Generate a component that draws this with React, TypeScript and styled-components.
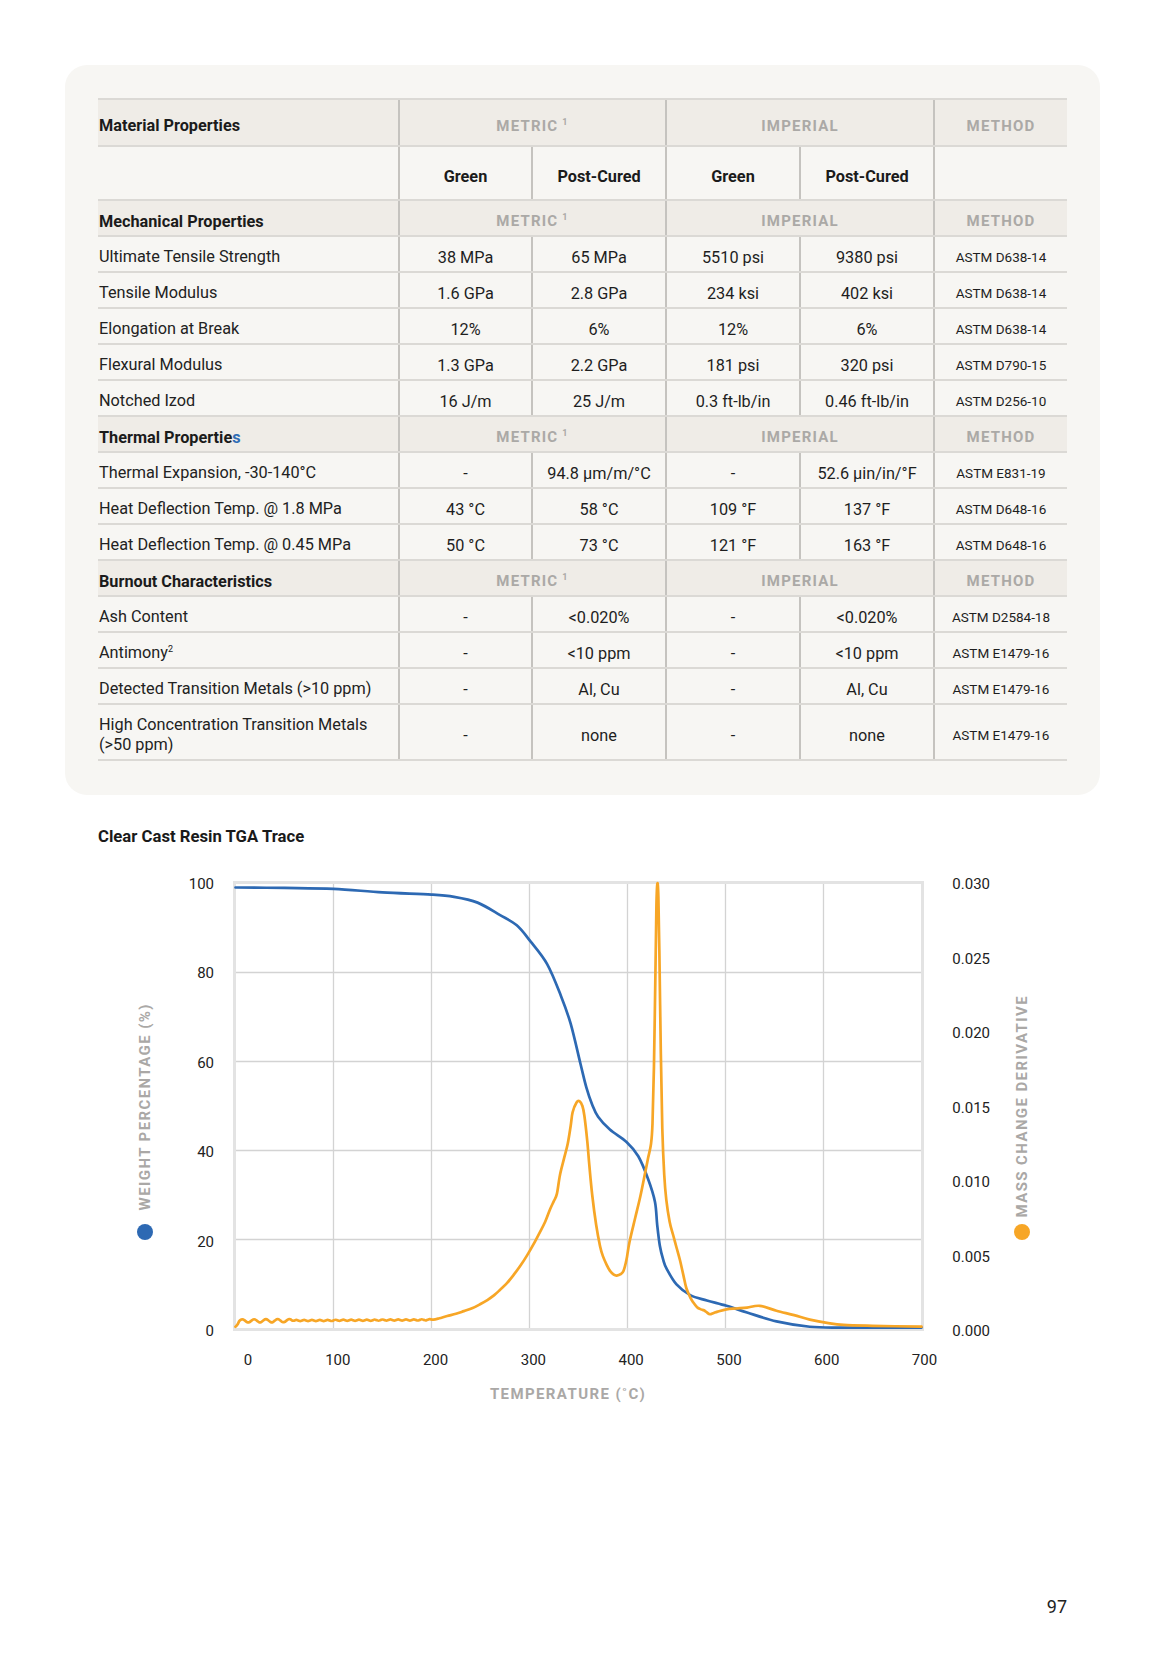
import React from 'react';
import styled, { createGlobalStyle } from 'styled-components';

const GlobalStyle = createGlobalStyle`
  html, body { margin: 0; padding: 0; background: #ffffff; }
  body {
    font-family: Roboto, "Liberation Sans", Arial, sans-serif;
    color: #1e1e1e;
    -webkit-font-smoothing: antialiased;
  }
  * { box-sizing: border-box; }
`;

const Page = styled.div`
  width: 1166px;
  min-height: 1654px;
  padding: 65px 66px 0 65px;
  display: flex;
  flex-direction: column;
`;

const Panel = styled.section`
  background: #f7f6f3;
  border-radius: 22px;
  padding: 33px 33px 34px 33px;
`;

const Table = styled.div`
  display: flex;
  flex-direction: column;
  border-top: 2px solid #dbd9d5;
`;

const Row = styled.div<{ $height: number; $shaded?: boolean }>`
  display: grid;
  grid-template-columns: 300px 133px 134px 134px 134px 134px;
  height: ${p => p.$height}px;
  border-bottom: 2px solid #dbd9d5;
  background: ${p => (p.$shaded ? '#efece7' : 'transparent')};
`;

const Cell = styled.div<{ $span?: number; $divider?: boolean; $left?: boolean }>`
  grid-column: span ${p => p.$span ?? 1};
  display: flex;
  align-items: center;
  justify-content: ${p => (p.$left ? 'flex-start' : 'center')};
  padding: ${p => (p.$left ? '6px 0 0 1px' : '6px 4px 0 4px')};
  border-left: ${p => (p.$divider ? '2px solid #c5c3bf' : '0')};
  text-align: ${p => (p.$left ? 'left' : 'center')};
`;

const RowLabel = styled.span`
  font-size: 16.25px;
  line-height: 20px;
  color: #222222;
`;

const SectionLabel = styled.span`
  font-size: 16.25px;
  font-weight: 700;
  color: #1b1b1b;
`;

const Accent = styled.span`
  color: #2f6db5;
`;

const GroupLabel = styled.span`
  font-size: 15px;
  font-weight: 700;
  letter-spacing: 1.2px;
  color: #aba9a6;
  text-transform: uppercase;
  white-space: nowrap;
`;

const SubHead = styled.span`
  font-size: 16.25px;
  font-weight: 700;
  color: #1b1b1b;
`;

const Value = styled.span`
  font-size: 16.25px;
  color: #1e1e1e;
  white-space: nowrap;
`;

const Method = styled.span`
  font-size: 13.5px;
  color: #1e1e1e;
  white-space: nowrap;
`;

const Sup = styled.sup<{ $gap?: number }>`
  font-size: 9px;
  line-height: 0;
  vertical-align: super;
  margin-left: ${p => p.$gap ?? 0}px;
`;

/* ---------- chart ---------- */

const ChartSection = styled.section`
  margin-top: 33px;
  padding-left: 33px;
`;

const ChartTitle = styled.h2`
  margin: 0;
  font-size: 16.7px;
  line-height: 18px;
  font-weight: 700;
  color: #1a1a1a;
`;

const ChartGrid = styled.div`
  margin-top: 35px;
  display: grid;
  grid-template-columns: 94px 41px 691px 76px 44px;
  grid-template-rows: 450px auto auto;
`;

const AxisTitleCol = styled.div<{ $col: number; $gap: number }>`
  grid-column: ${p => p.$col};
  grid-row: 1;
  display: flex;
  flex-direction: column;
  align-items: center;
  justify-content: flex-end;
  gap: ${p => p.$gap}px;
  padding-bottom: 91px;
`;

const AxisTitle = styled.span`
  writing-mode: vertical-rl;
  transform: rotate(180deg);
  font-size: 15px;
  line-height: 18px;
  font-weight: 700;
  letter-spacing: 1.4px;
  color: #aaa8a6;
  white-space: nowrap;
`;

const LegendDot = styled.span<{ $color: string }>`
  flex: none;
  width: 16px;
  height: 16px;
  border-radius: 50%;
  background: ${p => p.$color};
`;

const YTicks = styled.div<{ $col: number; $padRight: number }>`
  grid-column: ${p => p.$col};
  grid-row: 1;
  display: flex;
  flex-direction: column;
  justify-content: space-between;
  align-items: flex-end;
  padding: 3px ${p => p.$padRight}px 0 0;
`;

const Tick = styled.span`
  height: 0;
  display: flex;
  align-items: center;
  font-size: 15px;
  line-height: 18px;
  color: #222222;
  white-space: nowrap;
`;

const PlotSvg = styled.svg`
  grid-column: 3;
  grid-row: 1;
  display: block;
`;

const XTicks = styled.div`
  grid-column: 3;
  grid-row: 2;
  display: flex;
  justify-content: space-between;
  padding: 20px 1px 0 5.5px;
  height: 38px;
`;

const XTick = styled.span<{ $nudge?: number }>`
  width: 0;
  display: flex;
  justify-content: center;
  font-size: 15px;
  line-height: 18px;
  color: #222222;
  white-space: nowrap;
  transform: translateX(${p => p.$nudge ?? 0}px);
`;

const XTitle = styled.div`
  grid-column: 3;
  grid-row: 3;
  margin-top: 16px;
  padding-right: 21px;
  text-align: center;
  font-size: 15px;
  line-height: 18px;
  font-weight: 700;
  letter-spacing: 1.4px;
  color: #aaa8a6;
  white-space: nowrap;
`;

const Footer = styled.footer`
  margin-top: auto;
  padding: 0 33px 36px 0;
  text-align: right;
  font-size: 18px;
  line-height: 22px;
  color: #222222;
`;

/* ---------- data ---------- */

type DataRow = [React.ReactNode, string, string, string, string, string];

interface Section {
  title: React.ReactNode;
  rows: { cells: DataRow; height?: number }[];
}

const sections: Section[] = [
  {
    title: 'Mechanical Properties',
    rows: [
      { cells: ['Ultimate Tensile Strength', '38 MPa', '65 MPa', '5510 psi', '9380 psi', 'ASTM D638-14'] },
      { cells: ['Tensile Modulus', '1.6 GPa', '2.8 GPa', '234 ksi', '402 ksi', 'ASTM D638-14'] },
      { cells: ['Elongation at Break', '12%', '6%', '12%', '6%', 'ASTM D638-14'] },
      { cells: ['Flexural Modulus', '1.3 GPa', '2.2 GPa', '181 psi', '320 psi', 'ASTM D790-15'] },
      { cells: ['Notched Izod', '16 J/m', '25 J/m', '0.3 ft-lb/in', '0.46 ft-lb/in', 'ASTM D256-10'] },
    ],
  },
  {
    title: (
      <>
        Thermal Propertie<Accent>s</Accent>
      </>
    ),
    rows: [
      { cells: ['Thermal Expansion, -30-140°C', '-', '94.8 µm/m/°C', '-', '52.6 µin/in/°F', 'ASTM E831-19'] },
      { cells: ['Heat Deflection Temp. @ 1.8 MPa', '43 °C', '58 °C', '109 °F', '137 °F', 'ASTM D648-16'] },
      { cells: ['Heat Deflection Temp. @ 0.45 MPa', '50 °C', '73 °C', '121 °F', '163 °F', 'ASTM D648-16'] },
    ],
  },
  {
    title: 'Burnout Characteristics',
    rows: [
      { cells: ['Ash Content', '-', '<0.020%', '-', '<0.020%', 'ASTM D2584-18'] },
      {
        cells: [
          <>
            Antimony<Sup>2</Sup>
          </>,
          '-',
          '<10 ppm',
          '-',
          '<10 ppm',
          'ASTM E1479-16',
        ],
      },
      { cells: ['Detected Transition Metals (>10 ppm)', '-', 'Al, Cu', '-', 'Al, Cu', 'ASTM E1479-16'] },
      {
        cells: ['High Concentration Transition Metals (>50 ppm)', '-', 'none', '-', 'none', 'ASTM E1479-16'],
        height: 56,
      },
    ],
  },
];

const GroupCells: React.FC = () => (
  <>
    <Cell $span={2} $divider>
      <GroupLabel>
        Metric<Sup $gap={4}>1</Sup>
      </GroupLabel>
    </Cell>
    <Cell $span={2} $divider>
      <GroupLabel>Imperial</GroupLabel>
    </Cell>
    <Cell $divider>
      <GroupLabel>Method</GroupLabel>
    </Cell>
  </>
);

/* ---------- chart data ---------- */

const BLUE = '#2d69b3';
const ORANGE = '#f7a626';

const X = (t: number) => 2.5 + t * 0.98;
const Y = (w: number) => 2.5 + (100 - w) * 4.45;

const weight: [number, number][] = [
  [0, 99.1], [50, 99.0], [100, 98.8], [150, 98.0], [200, 97.5], [223, 97.0], [247, 95.7],
  [270, 92.9], [287, 90.6], [301, 87.0], [318, 81.9], [332, 74.8], [342, 68.5], [352, 59.5],
  [358, 54.2], [364, 50.3], [370, 47.6], [382, 44.7], [399, 41.9], [411, 38.7], [421, 33.6],
  [428, 28.5], [430.3, 23.3], [433, 18.6], [436.5, 15.4], [440, 13.4], [450, 9.9], [464, 7.5],
  [481, 6.3], [501, 5.1], [522, 3.6], [552, 1.6], [586, 0.4], [620, 0.2], [700, 0.2],
];

const noise: [number, number][] = (() => {
  const pts: [number, number][] = [[0, 0.4], [2, 0.9]];
  for (let t = 4; t <= 198; t += 2) {
    const early = t < 60;
    const amp = early ? 0.36 : 0.14;
    const period = early ? 12 : 8;
    const v = 1.7 + 0.25 * (t / 200) + amp * Math.sin(((t - 4) * 2 * Math.PI) / period);
    pts.push([t, v]);
  }
  return pts;
})();

const derivative: [number, number][] = [
  ...noise,
  [202, 2.0], [208, 2.3], [216, 2.8], [225, 3.3], [233, 3.9], [242, 4.6], [250, 5.5], [257, 6.4],
  [264, 7.5], [270, 8.7], [277, 10.2], [284, 12.1], [291, 14.2], [298, 16.6], [304, 18.9],
  [310, 21.4], [316, 24], [321, 26.8], [325, 28.7], [328, 30.3], [331, 34.4], [335, 38],
  [339, 41.5], [342, 45.5], [344, 48.6], [348, 50.8], [351, 51.1], [354, 50], [356, 47.8],
  [359, 42], [361, 36.8], [364, 30], [368, 23.3], [372, 18.5], [375, 16.2], [379, 14.2],
  [382, 13], [386, 12.1], [389, 11.9], [393, 12.2], [396, 13], [399, 15.5], [402, 19.4],
  [408, 25], [413, 29.6], [418, 35], [421, 38.3], [424, 41.5], [425.5, 46], [427, 58.9],
  [428.5, 80], [429.5, 95], [430.5, 100], [431.5, 97], [432.5, 85], [434, 62], [435.5, 45],
  [437.5, 34.5], [439.6, 28.9], [443, 24], [446.7, 20.9], [450, 18.2], [453.5, 15.4],
  [457, 12], [460, 9.1], [464, 7], [467, 5.9], [471, 4.8], [475, 4.3], [478, 4.1], [481, 3.6],
  [484, 3.2], [488, 3.5], [492, 3.8], [501, 4.3], [511, 4.5], [522, 4.7], [535, 5.1],
  [552, 4], [570, 3], [586, 2], [605, 1.2], [620.6, 0.8], [650, 0.6], [700, 0.4],
];

function smoothPath(data: [number, number][]): string {
  const pts = data.map(([t, v]) => [X(t), Y(v)] as [number, number]);
  let d = `M${pts[0][0].toFixed(2)},${pts[0][1].toFixed(2)}`;
  for (let i = 0; i < pts.length - 1; i++) {
    const p0 = pts[i - 1] || pts[i];
    const p1 = pts[i];
    const p2 = pts[i + 1];
    const p3 = pts[i + 2] || p2;
    const c1x = p1[0] + (p2[0] - p0[0]) / 6;
    const c1y = p1[1] + (p2[1] - p0[1]) / 6;
    const c2x = p2[0] - (p3[0] - p1[0]) / 6;
    const c2y = p2[1] - (p3[1] - p1[1]) / 6;
    d += ` C${c1x.toFixed(2)},${c1y.toFixed(2)} ${c2x.toFixed(2)},${c2y.toFixed(2)} ${p2[0].toFixed(2)},${p2[1].toFixed(2)}`;
  }
  return d;
}

const weightPath = smoothPath(weight);
const derivPath = smoothPath(derivative);

const TgaPlot: React.FC = () => (
  <PlotSvg width={691} height={450} viewBox="0 0 691 450">
    {[100, 200, 300, 400, 500, 600].map(t => (
      <line key={`v${t}`} x1={X(t)} x2={X(t)} y1={3} y2={447} stroke="#d3d3d3" strokeWidth={1.3} />
    ))}
    {[20, 40, 60, 80].map(w => (
      <line key={`h${w}`} x1={3} x2={688} y1={Y(w)} y2={Y(w)} stroke="#d3d3d3" strokeWidth={1.3} />
    ))}
    <rect x={1.5} y={1.5} width={688} height={447} fill="none" stroke="#e3e3e3" strokeWidth={3} />
    <path d={weightPath} fill="none" stroke={BLUE} strokeWidth={2.7} strokeLinejoin="round" strokeLinecap="round" />
    <path d={derivPath} fill="none" stroke={ORANGE} strokeWidth={2.7} strokeLinejoin="round" strokeLinecap="round" />
  </PlotSvg>
);

export default function App() {
  return (
    <>
      <GlobalStyle />
      <Page>
        <Panel>
          <Table>
            <Row $height={47} $shaded>
              <Cell $left>
                <SectionLabel>Material Properties</SectionLabel>
              </Cell>
              <GroupCells />
            </Row>
            <Row $height={54}>
              <Cell $left />
              <Cell $divider>
                <SubHead>Green</SubHead>
              </Cell>
              <Cell $divider>
                <SubHead>Post-Cured</SubHead>
              </Cell>
              <Cell $divider>
                <SubHead>Green</SubHead>
              </Cell>
              <Cell $divider>
                <SubHead>Post-Cured</SubHead>
              </Cell>
              <Cell $divider />
            </Row>
            {sections.map((section, si) => (
              <React.Fragment key={si}>
                <Row $height={36} $shaded>
                  <Cell $left>
                    <SectionLabel>{section.title}</SectionLabel>
                  </Cell>
                  <GroupCells />
                </Row>
                {section.rows.map((row, ri) => (
                  <Row key={ri} $height={row.height ?? 36}>
                    <Cell $left>
                      <RowLabel>{row.cells[0]}</RowLabel>
                    </Cell>
                    {row.cells.slice(1, 5).map((v, vi) => (
                      <Cell key={vi} $divider>
                        <Value>{v}</Value>
                      </Cell>
                    ))}
                    <Cell $divider>
                      <Method>{row.cells[5]}</Method>
                    </Cell>
                  </Row>
                ))}
              </React.Fragment>
            ))}
          </Table>
        </Panel>

        <ChartSection>
          <ChartTitle>Clear Cast Resin TGA Trace</ChartTitle>
          <ChartGrid>
            <AxisTitleCol $col={1} $gap={14}>
              <AxisTitle>WEIGHT PERCENTAGE (%)</AxisTitle>
              <LegendDot $color={BLUE} />
            </AxisTitleCol>
            <YTicks $col={2} $padRight={19}>
              {['100', '80', '60', '40', '20', '0'].map(l => (
                <Tick key={l}>{l}</Tick>
              ))}
            </YTicks>
            <TgaPlot />
            <YTicks $col={4} $padRight={10}>
              {['0.030', '0.025', '0.020', '0.015', '0.010', '0.005', '0.000'].map(l => (
                <Tick key={l}>{l}</Tick>
              ))}
            </YTicks>
            <AxisTitleCol $col={5} $gap={7}>
              <AxisTitle>MASS CHANGE DERIVATIVE</AxisTitle>
              <LegendDot $color={ORANGE} />
            </AxisTitleCol>
            <XTicks>
              {['0', '100', '200', '300', '400', '500', '600', '700'].map((l, i) => (
                <XTick key={l} $nudge={i === 0 ? 9.5 : 1.5}>
                  {l}
                </XTick>
              ))}
            </XTicks>
            <XTitle>TEMPERATURE (˚C)</XTitle>
          </ChartGrid>
        </ChartSection>

        <Footer>97</Footer>
      </Page>
    </>
  );
}
